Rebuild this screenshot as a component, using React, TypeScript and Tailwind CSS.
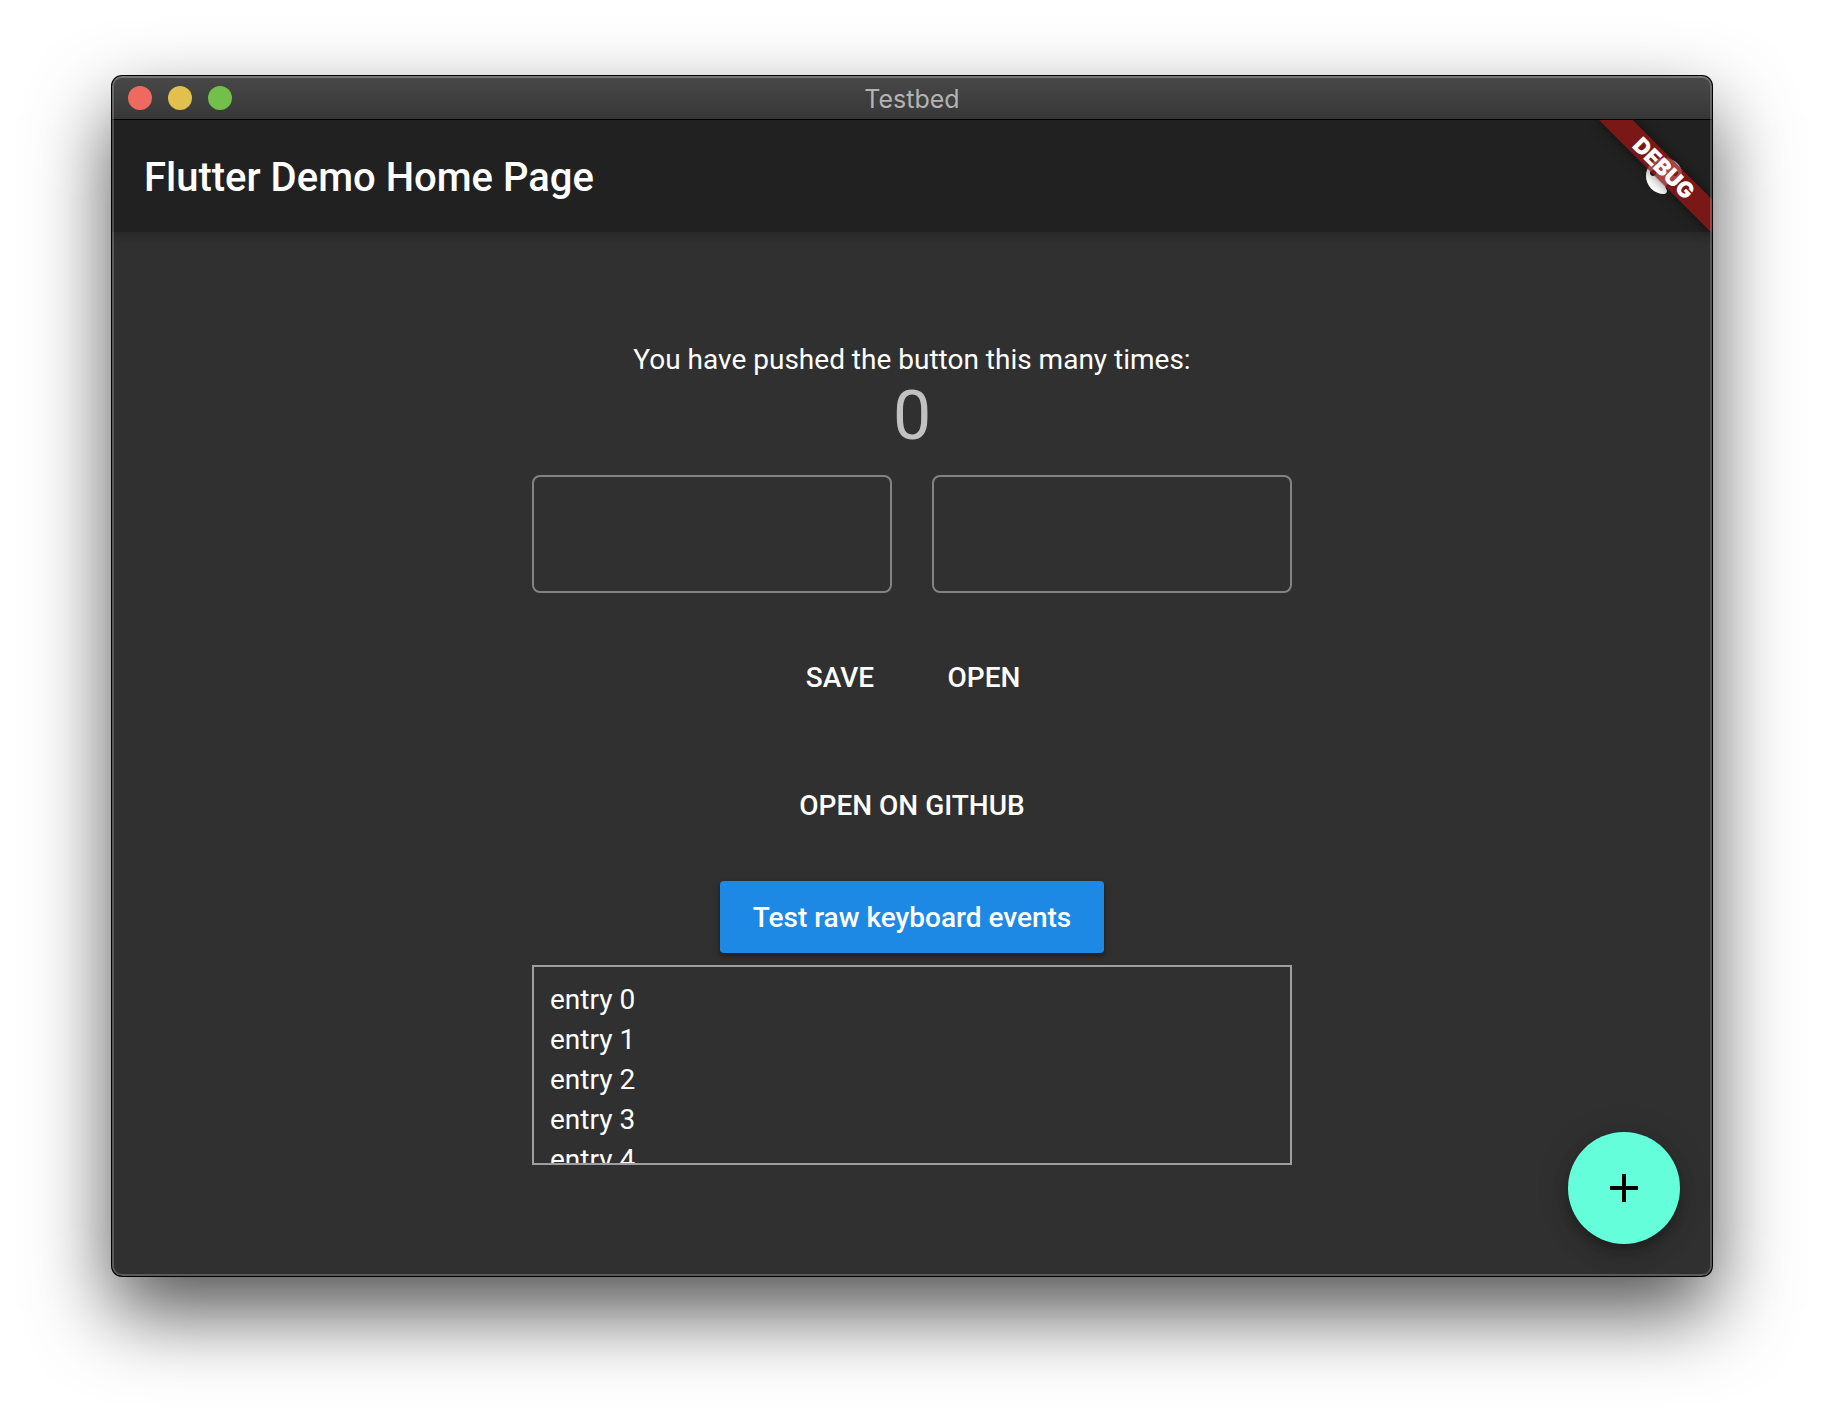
import React, { useState } from 'react';

const ENTRIES = ['entry 0', 'entry 1', 'entry 2', 'entry 3', 'entry 4'];

const PaletteIcon: React.FC = () => (
  <svg className="h-12 w-12" viewBox="0 0 24 24" fill="currentColor" aria-hidden="true">
    <path d="M12 3c-4.97 0-9 4.03-9 9s4.03 9 9 9c.83 0 1.5-.67 1.5-1.5 0-.39-.15-.74-.39-1.01-.23-.26-.38-.61-.38-.99 0-.83.67-1.5 1.5-1.5H16c2.76 0 5-2.24 5-5 0-4.42-4.03-8-9-8zm-5.5 9c-.83 0-1.5-.67-1.5-1.5S5.67 9 6.5 9 8 9.67 8 10.5 7.33 12 6.5 12zm3-4C8.67 8 8 7.33 8 6.5S8.67 5 9.5 5s1.5.67 1.5 1.5S10.33 8 9.5 8zm5 0c-.83 0-1.5-.67-1.5-1.5S13.67 5 14.5 5s1.5.67 1.5 1.5S15.33 8 14.5 8zm3 4c-.83 0-1.5-.67-1.5-1.5S16.67 9 17.5 9s1.5.67 1.5 1.5-.67 1.5-1.5 1.5z" />
  </svg>
);

const AddIcon: React.FC = () => (
  <svg className="h-12 w-12" viewBox="0 0 24 24" fill="currentColor" aria-hidden="true">
    <path d="M19 13h-6v6h-2v-6H5v-2h6V5h2v6h6v2z" />
  </svg>
);

const TitleBar: React.FC = () => (
  <div className="grid h-11 grid-cols-3 items-center border-b border-black bg-linear-to-b from-[#484848] to-[#383838] px-4">
    <div className="flex gap-4">
      <button type="button" aria-label="Close" className="h-6 w-6 rounded-full bg-[#ee6a5f]" />
      <button type="button" aria-label="Minimize" className="h-6 w-6 rounded-full bg-[#e1c04e]" />
      <button type="button" aria-label="Zoom" className="h-6 w-6 rounded-full bg-[#72bf49]" />
    </div>
    <div className="pt-0.5 text-center font-[Inter,sans-serif] text-[25px] leading-8 text-[#b4b3b3]">Testbed</div>
  </div>
);

const DebugBanner: React.FC = () => (
  <div className="pointer-events-none absolute top-11 right-0 h-40 w-40 overflow-hidden">
    {/* rotates around the top right corner of the app area */}
    <div className="absolute top-14 left-20 h-6 w-40 origin-[50%_-56px] rotate-45 bg-black/45 shadow-[0_0_12px_rgba(0,0,0,0.5)]">
      <div className="bg-[#b71c1c]/63 text-center font-[Inter,sans-serif] text-[22px] leading-6 font-black text-white">
        DEBUG
      </div>
    </div>
  </div>
);

const App: React.FC = () => {
  const [count, setCount] = useState(0);
  const [first, setFirst] = useState('');
  const [second, setSecond] = useState('');

  const fieldClass =
    'h-[118px] min-w-0 flex-1 rounded-lg border-2 border-[#838383] bg-transparent px-6 text-[32px] text-white outline-none focus:border-[#64ffda]';
  const flatButtonClass = 'h-18 min-w-32 rounded px-4 text-[28px] leading-[33px] font-medium hover:bg-white/5';

  return (
    <div className="flex min-h-screen flex-col bg-white px-28 pt-19 pb-37 font-[Roboto,sans-serif] text-white">
      <div className="relative flex flex-1 flex-col overflow-hidden rounded-[10px] bg-[#303030] shadow-[0_0_0_1px_#000,0_36px_80px_rgba(0,0,0,0.68)]">
        <TitleBar />

        <header className="z-10 flex h-28 items-center justify-between bg-[#212121] pl-8 shadow-[0_4px_12px_rgba(0,0,0,0.2)]">
          <h1 className="pt-1 text-[40px] leading-12 font-medium">Flutter Demo Home Page</h1>
          <button type="button" aria-label="Change theme color" className="flex h-24 w-24 items-center justify-center">
            <PaletteIcon />
          </button>
        </header>

        <main className="flex flex-1 flex-col items-center justify-center">
          <p className="text-[28px] leading-[33px]">You have pushed the button this many times:</p>
          <p className="text-[68px] leading-20 text-[#c1c1c1]">{count}</p>

          <div className="mt-[19px] flex w-full max-w-[760px] gap-10">
            <input aria-label="First value" className={fieldClass} value={first} onChange={(e) => setFirst(e.target.value)} />
            <input aria-label="Second value" className={fieldClass} value={second} onChange={(e) => setSecond(e.target.value)} />
          </div>

          <div className="mt-12 flex gap-4">
            <button type="button" className={flatButtonClass}>SAVE</button>
            <button type="button" className={flatButtonClass}>OPEN</button>
          </div>
          <button type="button" className={`mt-14 ${flatButtonClass}`}>OPEN ON GITHUB</button>
          <button
            type="button"
            className="mt-10 h-18 min-w-96 rounded bg-[#1e88e5] px-8 text-[28px] leading-[33px] font-medium shadow-[0_2px_4px_rgba(0,0,0,0.3),0_4px_8px_rgba(0,0,0,0.15)]"
          >
            Test raw keyboard events
          </button>

          <ul className="mt-3 h-50 w-full max-w-[760px] overflow-y-auto border-2 border-[#9e9e9e] p-4 [scrollbar-width:none]">
            {ENTRIES.map((entry) => (
              <li key={entry} className="h-10 text-[28px] leading-[33px]">{entry}</li>
            ))}
          </ul>
        </main>

        <button
          type="button"
          aria-label="Increment"
          onClick={() => setCount(count + 1)}
          className="absolute right-8 bottom-8 flex h-28 w-28 items-center justify-center rounded-full bg-[#64ffda] text-black shadow-[0_6px_10px_-2px_rgba(0,0,0,0.2),0_12px_20px_rgba(0,0,0,0.14),0_2px_36px_rgba(0,0,0,0.12)]"
        >
          <AddIcon />
        </button>

        <div className="pointer-events-none absolute inset-0 z-20">
          <DebugBanner />
        </div>

        {/* light rim along the inside of the window frame */}
        <div className="pointer-events-none absolute inset-0 z-30 rounded-[10px] border-2 border-white/20 border-t-white/25" />
      </div>
    </div>
  );
};

export default App;
